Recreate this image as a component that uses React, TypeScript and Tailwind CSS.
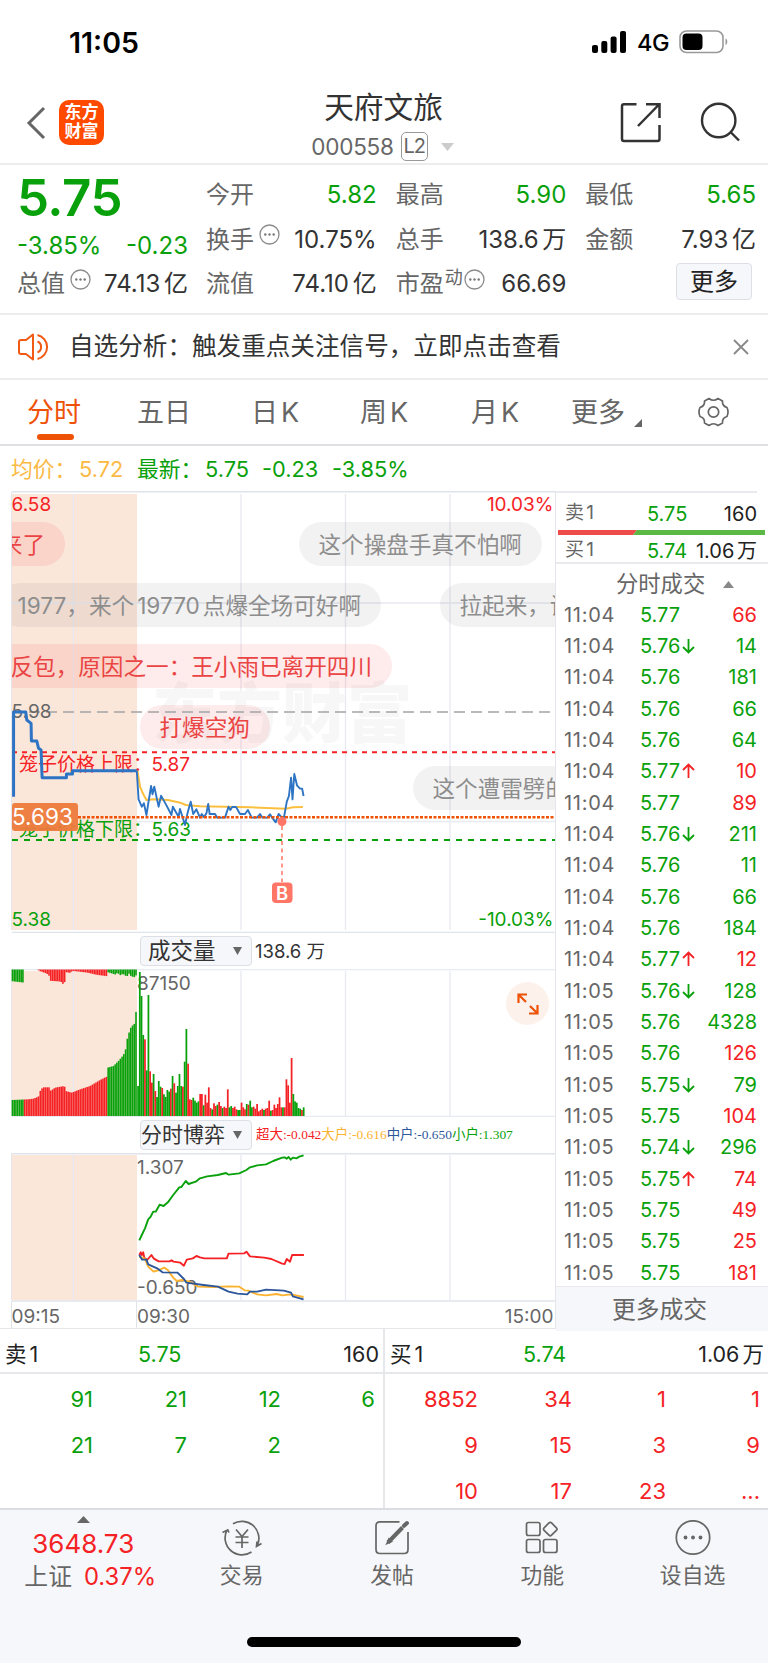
import React from 'react';

const GREEN = '#09a10b';
const RED = '#f52225';

type QuoteCell = { label: string; value: string; green?: boolean; info?: boolean; sup?: string };

const quoteCells: QuoteCell[] = [
  { label: '今开', value: '5.82', green: true },
  { label: '最高', value: '5.90', green: true },
  { label: '最低', value: '5.65', green: true },
  { label: '换手', value: '10.75%', info: true },
  { label: '总手', value: '138.6 万' },
  { label: '金额', value: '7.93 亿' },
  { label: '流值', value: '74.10 亿' },
  { label: '市盈', value: '66.69', info: true, sup: '动' },
];

// time, price, direction, volume, volume is red
const trades: [string, string, string, string, boolean][] = [
  ['11:04', '5.77', '', '66', true],
  ['11:04', '5.76', '↓', '14', false],
  ['11:04', '5.76', '', '181', false],
  ['11:04', '5.76', '', '66', false],
  ['11:04', '5.76', '', '64', false],
  ['11:04', '5.77', '↑', '10', true],
  ['11:04', '5.77', '', '89', true],
  ['11:04', '5.76', '↓', '211', false],
  ['11:04', '5.76', '', '11', false],
  ['11:04', '5.76', '', '66', false],
  ['11:04', '5.76', '', '184', false],
  ['11:04', '5.77', '↑', '12', true],
  ['11:05', '5.76', '↓', '128', false],
  ['11:05', '5.76', '', '4328', false],
  ['11:05', '5.76', '', '126', true],
  ['11:05', '5.75', '↓', '79', false],
  ['11:05', '5.75', '', '104', true],
  ['11:05', '5.74', '↓', '296', false],
  ['11:05', '5.75', '↑', '74', true],
  ['11:05', '5.75', '', '49', true],
  ['11:05', '5.75', '', '25', true],
  ['11:05', '5.75', '', '181', true],
];

const volumeBars =
  'g90 g432 g360 g243 r230 g137 g363 r134 r100 g126 r75 g57 g105 g88 r84 g65 g57 g78 g73 r82 g120 r98 g70 g90 g126 g90 r88 g163 g261 r157 r50 r48 g55 g46 g40 g44 r66 r66 g32 r64 r40 r86 r24 g20 r38 r30 g34 r42 r30 g24 r28 r24 r80 g26 g30 r24 r28 r20 g18 g18 r40 r26 r20 g36 r34 g46 g26 r28 r22 r36 r14 r18 r22 g18 r22 r24 r46 g16 r18 r34 r24 r36 r56 r26 g26 r26 r110 r92 r40 r174 g66 g44 g40 g24 g22 r18 g26'.split(' ');

const auctionBottom: [number, number][] = [
  [35, 48], [84, 50], [100, 52], [115, 58], [122, 80], [130, 86], [148, 86], [152, 76], [165, 85], [193, 90], [197, 75], [215, 70], [240, 80],
  [270, 90], [300, 108], [320, 118], [322, 145], [340, 150], [355, 165], [370, 183], [376, 198], [381, 230], [390, 262], [400, 275], [406, 278], [408, 320], [412, 322],
];
const auctionTop: [number, number][] = [
  [35, 35], [69, 39], [71, 0], [110, 0], [120, 5], [140, 12], [148, 20], [151, 34], [182, 36], [187, 43], [193, 43], [197, 8], [212, 10],
  [216, 4], [260, 9], [290, 16], [321, 20], [323, 8], [345, 15], [352, 10], [362, 18], [368, 12], [380, 22], [386, 12], [396, 24], [400, 16], [405, 30], [408, 16], [412, 16],
];

const lerp = (keys: [number, number][], x: number) => {
  const i = keys.findIndex(([kx]) => kx >= x);
  if (i <= 0) return keys[i === 0 ? 0 : keys.length - 1][1];
  const [x0, y0] = keys[i - 1];
  const [x1, y1] = keys[i];
  return y0 + ((y1 - y0) * (x - x0)) / (x1 - x0);
};

const auction = Array.from({ length: 72 }, (_, i) => {
  const x = 35 + i * 5.22;
  const bottomGreen = x < 69 || x > 320 || (x > 93 && x < 97);
  const topGreen = x < 105 || x > 320;
  return { x: x / 3, bottom: lerp(auctionBottom, x + 2) / 3, top: lerp(auctionTop, x + 2) / 3, bottomGreen, topGreen };
});

const Info: React.FC = () => (
  <svg width="21" height="21" viewBox="0 0 21 21" className="shrink-0">
    <circle cx="10.5" cy="10.5" r="9.5" fill="none" stroke="#8c8c8c" strokeWidth="1.3" />
    {[6.3, 10.5, 14.7].map((x) => <circle key={x} cx={x} cy="10.5" r="1.2" fill="#777" />)}
  </svg>
);

const StatusBar: React.FC = () => (
  <div className="h-[84px] flex items-start justify-between pl-[69px] pr-[39px] text-black">
    <span className="mt-[25px] text-[28.5px] leading-[36px] font-semibold">11:05</span>
    <div className="flex mt-[30px] items-center h-[24px]">
      <svg width="35" height="22" viewBox="0 0 35 22">
        <rect x="0" y="14" width="6" height="8" rx="2" />
        <rect x="9.3" y="10" width="6" height="12" rx="2" />
        <rect x="18.6" y="5.500" width="6" height="16.500" rx="2" />
        <rect x="28" y="0" width="6" height="22" rx="2" />
      </svg>
      <span className="ml-[10px] w-[34px] text-[23.5px] leading-[24px] font-medium tracking-[-0.5px] pt-[2px]">4G</span>
      <svg width="50" height="24" viewBox="0 0 50 24" className="ml-[8px]">
        <rect x="1" y="1" width="43" height="21.5" rx="6.500" fill="none" stroke="#999" strokeWidth="1.6" />
        <rect x="3.500" y="3.500" width="20" height="16.500" rx="4" />
        <path d="M46.500 8.500c2.400 1 2.400 5.500 0 6.500z" fill="#999" />
      </svg>
    </div>
  </div>
);

const Header: React.FC = () => (
  <div className="h-[81px] flex border-b-2 border-[#ececee]">
    <div className="w-[260px] flex pl-[26px] pt-[16px]">
      <svg width="20" height="34" viewBox="0 0 20 34" className="mt-[6px]">
        <path d="M18 2L3 17L18 32" fill="none" stroke="#666" strokeWidth="3" />
      </svg>
      <div className="ml-[13px] w-[45px] h-[45px] rounded-[10px] bg-[#ff4a00] text-white text-[17px] leading-[18.5px] font-bold text-center pt-[3px]">
        东方<br />财富
      </div>
    </div>
    <div className="flex-1 flex flex-col items-center">
      <div className="text-[29.7px] leading-[36px] mt-[5px] pr-px text-[#333]">天府文旅</div>
      <div className="flex items-center h-[29px] mt-[7px] pr-[3px] text-[#666]">
        <span className="text-[22.5px] tracking-[-0.200px]">000558</span>
        <span className="ml-[7px] w-[27px] h-[29px] border-[1.5px] border-[#999] rounded-[5px] text-[20px] leading-[26px] text-center tracking-[-1px]">L2</span>
        <svg width="13" height="8" viewBox="0 0 13 8" className="ml-[13px]"><path d="M0 0H13L6.5 8z" fill="#ccc" /></svg>
      </div>
    </div>
    <div className="w-[260px] flex justify-end pr-[27px] pt-[18px]">
      <svg width="41" height="41" viewBox="0 0 41 41" fill="none" stroke="#333" strokeWidth="2.500">
        <path d="M16.500 2.200H4Q2 2.200 2 4.200V37Q2 39 4 39H37.500Q39.500 39 39.500 37V23M26 2.200H39.500V16M39 2.500L18 24" />
      </svg>
      <svg width="41" height="41" viewBox="0 0 41 41" fill="none" stroke="#333" strokeWidth="2.400" className="ml-[39px]">
        <circle cx="18.700" cy="18.500" r="16.700" />
        <path d="M30.500 30L39 38.500" />
      </svg>
    </div>
  </div>
);

const Quote: React.FC = () => (
  <div className="h-[150px] flex border-b-2 border-[#ececee] pl-[17px] pr-[12px] text-[24px] leading-[30px] [word-spacing:-3px]">
    <div className="w-[171px] pt-[5px]">
      <div className="text-[51px] leading-[56px] font-semibold text-[#09a10b] tracking-[-0.5px]">5.75</div>
      <div className="flex justify-between text-[#09a10b] mt-[5px]">
        <span>-3.85%</span>
        <span>-0.23</span>
      </div>
      <div className="flex mt-[8px] text-[#333]">
        <span className="text-[#666]">总值</span>
        <span className="ml-[5px]"><Info /></span>
        <span className="ml-auto">74.13 亿</span>
      </div>
    </div>
    <div className="flex-1 ml-[18px] pt-[15px] grid grid-cols-3 gap-x-[19px] auto-rows-[44.6px]">
      {quoteCells.map((c) => (
        <div key={c.label} className="flex">
          <span className="text-[#666]">{c.label}</span>
          {c.sup && <span className="text-[18px] leading-[18px] ml-px text-[#666]">{c.sup}</span>}
          {c.info && <span className={c.sup ? 'ml-px' : '-mt-px ml-[5px]'}><Info /></span>}
          <span className={`ml-auto ${c.green ? 'text-[#09a10b]' : 'text-[#333]'}`}>{c.value}</span>
        </div>
      ))}
      <div className="flex justify-end pr-[4px]">
        <button className="-mt-[6px] w-[76px] h-[37px] rounded-[4px] border-[1.5px] border-[#dcdfe6] bg-[#f6f7fa] text-[24px] leading-[32px] text-[#222]">更多</button>
      </div>
    </div>
  </div>
);

const Notice: React.FC = () => (
  <div className="h-[65px] flex items-center border-b-2 border-[#ececee] pl-[18px] pr-[19px]">
    <svg width="32" height="28" viewBox="0 0 32 28" fill="none" stroke="#f05a14" strokeWidth="2">
      <path d="M15 1.500V26.500L8 21H3Q1 21 1 19V9Q1 7 3 7H8z" strokeLinejoin="round" />
      <path d="M19.500 8.500A6 6 0 0 1 19.500 19.500M19.500 2A12.300 12.300 0 0 1 19.500 26" />
    </svg>
    <span className="ml-[19px] text-[24.6px] text-[#333] whitespace-nowrap">自选分析：触发重点关注信号，立即点击查看</span>
    <svg width="16" height="16" viewBox="0 0 16 16" className="ml-auto"><path d="M1 1L15 15M15 1L1 15" stroke="#888" strokeWidth="1.8" /></svg>
  </div>
);

const Tabs: React.FC = () => (
  <div className="h-[66px] flex border-b-2 border-[#dfe0e3] text-[27px] leading-[36px] text-[#666] pt-[15px] pl-[27px] whitespace-nowrap">
    <div className="w-[110px] text-[#ee5206]">
      分时
      <div className="ml-[10px] mt-[3px] w-[37px] h-[6px] rounded-full bg-[#ee5206]" />
    </div>
    <div className="w-[114px]">五日</div>
    <div className="w-[109px] tracking-[3px]">日K</div>
    <div className="w-[111px] tracking-[3px]">周K</div>
    <div className="w-[100px] tracking-[3px]">月K</div>
    <div className="w-[127px] flex">
      更多
      <svg width="8" height="8" viewBox="0 0 8 8" className="ml-[9px] mt-[24px]"><path d="M8 0V8H0z" fill="#666" /></svg>
    </div>
    <svg width="31" height="30" viewBox="0 0 31 30" fill="none" stroke="#666" strokeWidth="1.700" strokeLinejoin="round" className="mt-[2px]">
      <path d="M11 1.500Q15.500 5 20 1.500L24.500 4Q24 9 29 10.500Q31 15 29 19.500Q24 21 24.500 26L20 28.500Q15.500 25 11 28.500L6.500 26Q7 21 2 19.500Q0 15 2 10.500Q7 9 6.500 4z" />
      <circle cx="15.500" cy="15" r="5.200" />
    </svg>
  </div>
);

const Pill: React.FC<{ className: string; red?: boolean; children: React.ReactNode }> = ({ className, red, children }) => (
  <div className={`absolute h-[44px] rounded-full leading-[45px] text-[22.6px] px-[20px] whitespace-nowrap ${red ? 'bg-[#f23c3c]/10 text-[#ea4444]' : 'bg-black/5 text-[#8d8d8d]'} ${className}`}>
    {children}
  </div>
);

const Grid: React.FC<{ top: number; bottom: number }> = ({ top, bottom }) => (
  <>
    <rect x="12" y={top} width="125" height={bottom - top} fill="#fbe6da" />
    {[73.5, 241, 345.500, 450].map((x) => <path key={x} d={`M${x} ${top}V${bottom}`} stroke="#e7eaf2" strokeWidth="1.300" />)}
    <path d={`M11.500 ${top - 2}V${bottom}`} stroke="#e4e6ec" />
  </>
);

const PriceChart: React.FC = () => (
  <div className="relative w-[555px] h-[442px] overflow-hidden">
    <svg width="555" height="442" viewBox="0 491 555 442" className="absolute inset-0">
      <Grid top={494} bottom={930} />
      <path d="M12 603H555M137 821.500H555" stroke="#e7eaf2" strokeWidth="1.300" />
      <path d="M12 491.700H555M12 932.500H555" stroke="#dfe3ea" strokeWidth="1.600" />
      <text x="152" y="737" fontSize="65" fontWeight="900" fill="#f7f7f8">东方财富</text>
    </svg>
    <div className="absolute left-[11.500px] right-0 inset-y-0 overflow-hidden">
      <Pill red className="top-[31px] right-[490px]">来了</Pill>
      <Pill className="top-[31px] left-[287px]">这个操盘手真不怕啊</Pill>
      <Pill className="top-[92px] right-[174px]">1977，来个<span className="mx-[3px]">19770</span>点爆全场可好啊</Pill>
      <Pill className="top-[92px] left-[428px]">拉起来，试</Pill>
      <Pill red className="top-[153px] right-[163px]">反包，原因之一：王小雨已离开四川</Pill>
      <Pill red className="top-[214px] left-[128px]">打爆空狗</Pill>
      <Pill className="top-[275px] left-[401px]">这个遭雷劈的</Pill>
    </div>
    <svg width="555" height="442" viewBox="0 491 555 442" className="absolute inset-0">
      <path d="M12 712H555" stroke="#a4a4a4" strokeWidth="1.500" strokeDasharray="11 6" />
      <path d="M12 752.300H555" stroke={RED} strokeWidth="2" strokeDasharray="5 5" />
      <path d="M12 840H555" stroke={GREEN} strokeWidth="2" strokeDasharray="6 6" />
      <g fontSize="19" fill="#666">
        <text x="11.500" y="718">5.98</text>
        <text x="11.500" y="510.500" fill={RED}>6.58</text>
        <text x="553.500" y="510.500" fill={RED} textAnchor="end">10.03%</text>
        <text x="11.500" y="926" fill={GREEN}>5.38</text>
        <text x="553.500" y="926" fill={GREEN} textAnchor="end">-10.03%</text>
        <text x="19" y="770.500" fill={RED}>笼子价格上限：</text>
        <text x="151.500" y="770.500" fill={RED}>5.87</text>
        <text x="19" y="836" fill={GREEN}>笼子价格下限：</text>
        <text x="151.500" y="836" fill={GREEN}>5.63</text>
      </g>
      <g transform="translate(0 690) scale(.35714 .33333)" fill="none" strokeLinejoin="round">
        <path vectorEffect="non-scaling-stroke" stroke="#fbbf3f" strokeWidth="2" d="M385 242L392 290L400 310L410 330L430 328L470 330L505 338L520 345L560 349L700 352L800 356L820 352L848 351" />
        <path vectorEffect="non-scaling-stroke" stroke="#2e74c4" strokeWidth="3" d="M38 320V66H72L75 90L87 100L88 153H103L108 175L115 180L117 240L118 263H186V252H203V242H383" />
        <path vectorEffect="non-scaling-stroke" stroke="#2e74c4" strokeWidth="1.900" d="M383 242L388 328L397 350L403 340L410 375L423 288L427 313L432 290L444 350L451 317L468 350L480 375L484 350L500 380L504 357L518 405L526 365L534 335L541 372L550 358L560 383L565 372L571 382L578 370L583 342L587 372H602L608 383H630L640 350L645 360L650 351H661L672 372H686L694 360L705 383H720L728 372L735 383H748L756 373L762 383L772 397L780 372L787 380L795 383L803 335L809 318L815 263L819 328L824 252L832 287L840 296H846L850 318" />
      </g>
      <rect x="12" y="803" width="66" height="28" rx="3" fill="#ee7a3c" fillOpacity=".95" />
      <text x="12" y="825" fontSize="22.500" fill="#fff">5.693</text>
      <path d="M78 817.300H555" stroke="#ee5206" strokeWidth="2.600" strokeDasharray="3 1.500" />
      <circle cx="282" cy="821.500" r="4.500" fill="#ff7566" />
      <path d="M282 826V882" stroke="#ff7566" strokeWidth="1.500" strokeDasharray="4 3.500" />
      <rect x="272" y="882.500" width="20.500" height="20.500" rx="4" fill="#ff7566" />
      <text x="282.200" y="899.500" fontSize="18.500" fontWeight="600" fill="#fff" textAnchor="middle">B</text>
    </svg>
  </div>
);

const Select: React.FC<{ children: string; pad: string }> = ({ children, pad }) => (
  <div className={`ml-[140px] w-[112px] h-[30px] flex items-center rounded-[4px] border-[1.500px] border-[#dcdfe6] bg-[#f6f7fa] leading-[28px] text-[#333] whitespace-nowrap ${pad}`}>
    {children}
    <svg width="9" height="8" viewBox="0 0 9 8" className="ml-auto"><path d="M0 0H9L4.500 8z" fill="#666" /></svg>
  </div>
);

const VolumeChart: React.FC = () => (
  <>
    <div className="h-[36px] flex pt-[3px] items-start">
      <Select pad="pl-[7px] pr-[9px] text-[22.500px]">成交量</Select>
      <span className="ml-[3px] text-[18.500px] leading-[31px] text-[#333]">138.6 万</span>
    </div>
    <div className="relative h-[148px]">
      <svg width="555" height="148" viewBox="0 969 555 148">
        <Grid top={971} bottom={1116} />
        <path d="M12 969.500H555M12 1116.500H555" stroke="#e7eaf0" strokeWidth="1.500" />
        {auction.map((b) => (
          <g key={b.x}>
            <rect x={b.x} y={969.5} width="1.6" height={b.top} fill={b.topGreen ? GREEN : RED} />
            <rect x={b.x} y={1116 - b.bottom} width="1.6" height={b.bottom} fill={b.bottomGreen ? GREEN : RED} />
          </g>
        ))}
        <text x="137" y="990" fontSize="19" fill="#666">87150</text>
        {volumeBars.map((bar, i) => {
          const h = Number(bar.slice(1)) / 3;
          return <rect key={i} x={137.2 + i * 1.725} y={1116 - h} width="1.75" height={h} fill={bar[0] === 'g' ? GREEN : RED} />;
        })}
      </svg>
      <div className="absolute left-[506px] top-[13px] w-[43px] h-[43px] rounded-full bg-[#fdf1eb] flex items-center justify-center">
        <svg width="22" height="22" viewBox="0 0 22 22" fill="none" stroke="#ee5206" strokeWidth="2.200">
          <path d="M1.500 10V1.500H10M1.500 1.500L9 9M20.500 12V20.500H12M20.500 20.500L13 13" />
        </svg>
      </div>
    </div>
  </>
);

const FlowChart: React.FC = () => (
  <>
    <div className="h-[36px] flex pt-[3px] items-start">
      <Select pad="pl-0 pr-[9px] text-[21px]">分时博弈</Select>
      <span className="ml-[4px] font-['Liberation_Serif','Noto_Sans_CJK_SC',serif] text-[13.450px] leading-[30px] whitespace-nowrap">
        <span className="text-[#f52225]">超大:-0.042</span>
        <span className="text-[#fbb32f]">大户:-0.616</span>
        <span className="text-[#2d579b]">中户:-0.650</span>
        <span className="text-[#09a10b]">小户:1.307</span>
      </span>
    </div>
    <svg width="555" height="176" viewBox="0 1153 555 176" className="block">
      <Grid top={1155} bottom={1300} />
      <path d="M12 1153.700H555M12 1301H555" stroke="#dfe3ea" strokeWidth="1.700" />
      <path d="M136.500 1301V1329M11.500 1301V1329" stroke="#dfe3ea" />
      <g fontSize="19" fill="#666">
        <text x="137" y="1173.500">1.307</text>
        <text x="137" y="1294">-0.650</text>
        <text x="11.500" y="1322.500">09:15</text>
        <text x="137" y="1322.500">09:30</text>
        <text x="553.500" y="1322.500" textAnchor="end">15:00</text>
      </g>
      <g transform="translate(0 1115) scale(.35714 .33333)" fill="none" strokeWidth="1.900" strokeLinejoin="round">
        <path vectorEffect="non-scaling-stroke" stroke={GREEN} d="M390 376L397 360L406 340L415 313L422 305L429 290H436L447 269L458 273L470 262L485 240L502 217L508 216L520 198L528 207L548 200L560 190L580 184L610 180L633 174L640 179L670 175L690 165L700 157L720 151L745 148L765 138L790 128L797 127L803 131L808 126L814 134L820 128L830 130L838 125L850 121" />
        <path vectorEffect="non-scaling-stroke" stroke={RED} d="M390 420L394 412L397 420L401 412L404 428L412 435L424 420L430 430L444 439H475L480 436L486 440L505 443L515 452L523 434L540 430L550 423L560 427L572 430H635L640 416L684 415L690 410L700 424L740 428L760 432L790 446L797 447L803 432L812 440L818 420H851" />
        <path vectorEffect="non-scaling-stroke" stroke="#fbb32f" d="M390 425L405 430L415 455L430 470L445 465L460 458L470 465L485 488L495 498L510 495L530 500L555 515L600 516L640 514L670 515L685 526L695 527L720 538L745 541L775 537L790 541L815 538L850 546" />
        <path vectorEffect="non-scaling-stroke" stroke="#2d579b" d="M390 420L398 434H410L415 448L440 460L455 472L497 473L515 492L522 503L570 510L610 515L640 530L665 536L692 538L700 530H720L745 524L795 527L815 533L820 544L850 553" />
      </g>
    </svg>
  </>
);

const TradePanel: React.FC = () => (
  <div className="w-[213px] border-l border-[#e4e6ec] text-[20px] [word-spacing:-3px]">
    <div className="mr-[11px] border-t-2 border-[#e8eaee] h-[39px] flex items-center pt-[4px]">
      <span className="ml-[9px] w-[82px] text-[#666] text-[19px]">卖 1</span>
      <span className="text-[#09a10b]">5.75</span>
      <span className="ml-auto text-[#222]">160</span>
    </div>
    <svg width="207" height="5" viewBox="0 0 207 5" className="ml-[2px]">
      <path d="M0 0H79L75 5H0z" fill="#ee4b4b" />
      <path d="M79 0H207V5H75z" fill="#5cb946" />
    </svg>
    <div className="h-[29px] pr-[11px] flex items-center border-b-2 border-[#e8eaee] pt-[4px]">
      <span className="ml-[9px] w-[82px] text-[#666] text-[19px]">买 1</span>
      <span className="text-[#09a10b]">5.74</span>
      <span className="ml-auto text-[#222]">1.06 万</span>
    </div>
    <div className="h-[35px] flex items-center pl-[60px] pt-[5px] text-[22.300px] text-[#666]">
      分时成交
      <svg width="11" height="7" viewBox="0 0 11 7" className="ml-[18px]"><path d="M0 7H11L5.500 0z" fill="#888" /></svg>
    </div>
    {trades.map(([time, price, dir, vol, red], i) => (
      <div key={i} className="h-[31.330px] flex items-center pr-[11px]">
        <span className="ml-[8px] w-[76px] text-[#666] tracking-[0.700px]">{time}</span>
        <span className="w-[41px] text-[#09a10b]">{price}</span>
        {dir && (
          <svg width="13" height="16" viewBox="0 0 13 16" fill="none" stroke={dir === '↑' ? RED : GREEN} strokeWidth="1.800" className="ml-px">
            <path d={dir === '↑' ? 'M6.500 15V1.500M1 7L6.500 1.500L12 7' : 'M6.500 1V14.500M1 9L6.500 14.500L12 9'} />
          </svg>
        )}
        <span className={`ml-auto ${red ? 'text-[#f52225]' : 'text-[#09a10b]'}`}>{vol}</span>
      </div>
    ))}
    <div className="h-[45px] -mt-[2px] bg-[#f6f7fa] border-t border-[#e8eaee] text-center text-[23.800px] leading-[46px] text-[#666] pr-[5px]">更多成交</div>
  </div>
);

const OrderSide: React.FC<{ label: string; price: string; total: string; rows: string[][]; className: string; color: string }> = ({ label, price, total, rows, className, color }) => (
  <div className={className}>
    <div className="h-[45px] flex items-center justify-between border-b-2 border-[#e6e7eb] pl-[5px] pr-[4px] pt-[7px] text-[21.500px] text-[#222] [word-spacing:-3px]">
      <span className="w-[133px]">{label}</span>
      <span className="text-[#09a10b]">{price}</span>
      <span className="flex-1 text-right">{total}</span>
    </div>
    <div className={`grid grid-cols-4 pt-[2px] pr-[8px] -ml-px auto-rows-[46px] leading-[46px] text-right text-[22px] ${color}`}>
      {rows.flat().map((n, i) => <span key={i}>{n}</span>)}
    </div>
  </div>
);

const NavItem: React.FC<{ label: string; children: React.ReactNode }> = ({ label, children }) => (
  <div className="w-[150.300px] flex flex-col items-center">
    <svg width="42" height="36" viewBox="0 0 42 36" fill="none" stroke="#666" strokeWidth="1.700" className="mt-[10px]">
      {children}
    </svg>
    <span className="mt-[4px] text-[21.800px] leading-[30px] text-[#666]">{label}</span>
  </div>
);

const BottomNav: React.FC = () => (
  <div className="relative h-[155px] bg-[#f6f7fa] border-t-2 border-[#d9dce2] flex">
    <div className="w-[166.500px] flex flex-col items-center">
      <svg width="13" height="7" viewBox="0 0 13 7" className="mt-[6px]"><path d="M0 7H13L6.500 0z" fill="#666" /></svg>
      <span className="mt-[4px] text-[26px] leading-[34px] text-[#f52225]">3648.73</span>
      <span className="text-[23.800px] leading-[32px] text-[#666] pl-[14px] whitespace-nowrap">
        上证<span className="ml-[12px] text-[#f52225]">0.37%</span>
      </span>
    </div>
    <NavItem label="交易">
      <path d="M12 3.800A17 17 0 0 1 36.500 25M30.500 32A17 17 0 0 1 6 10M1.500 12.500L6.800 9.800L8 12.500M40.500 23.500L35.500 26.500L36 21.500" />
      <path d="M15 9.500L21 16.500L27 9.500M14.500 17H27.500M14.500 22.500H27.500M21 16.500V28" />
    </NavItem>
    <NavItem label="发帖">
      <path d="M28.500 1.800H9Q5 1.800 5 5.800V29.500Q5 33.500 9 33.500H33Q37 33.500 37 29.500V12" />
      <path d="M17 22.500L31.500 7.500" strokeWidth="4" />
      <path d="M16 23.500L20.500 21.500L18 19z" fill="#666" />
      <path d="M33 5.800L36 3" strokeWidth="4" strokeLinecap="round" />
    </NavItem>
    <NavItem label="功能">
      <rect x="5.500" y="2.500" width="13.500" height="13" rx="2" />
      <rect x="5.500" y="19.500" width="13.500" height="13" rx="2" />
      <rect x="22.500" y="19.500" width="13.500" height="13" rx="2" />
      <rect x="24" y="3.800" width="10.500" height="10.500" rx="1.800" transform="rotate(45 29.250 9.050)" />
    </NavItem>
    <NavItem label="设自选">
      <circle cx="21" cy="17.500" r="16.700" />
      {[13.5, 21, 28.5].map((x) => <circle key={x} cx={x} cy="17.500" r="1.900" fill="#666" stroke="none" />)}
    </NavItem>
    <div className="absolute left-[247px] top-[127px] w-[274px] h-[10px] rounded-full bg-black" />
  </div>
);

export default function App() {
  return (
    <div className="w-[768px] h-[1663px] bg-white overflow-hidden font-['Inter','Noto_Sans_CJK_SC',sans-serif]">
      <StatusBar />
      <Header />
      <Quote />
      <Notice />
      <Tabs />
      <div className="h-[45px] flex items-center pl-[11px] pt-px text-[21.800px] text-[#09a10b] whitespace-nowrap">
        <span className="w-[68px] text-[#fbb944]">均价：</span>
        <span className="w-[58px] text-[#fbb944]">5.72</span>
        <span className="w-[68px]">最新：</span>
        <span className="w-[57px]">5.75</span>
        <span className="w-[70px]">-0.23</span>
        <span>-3.85%</span>
      </div>
      <div className="h-[838px] flex">
        <div className="w-[555px] border-b-[1.500px] border-[#e4e6ea]">
          <PriceChart />
          <VolumeChart />
          <FlowChart />
        </div>
        <TradePanel />
      </div>
      <div className="h-[179px] flex overflow-hidden">
        <OrderSide
          className="w-[383px]"
          color="text-[#09a10b]"
          label="卖 1"
          price="5.75"
          total="160"
          rows={[['91', '21', '12', '6'], ['21', '7', '2', '']]}
        />
        <OrderSide
          className="w-[385px] border-l-2 border-[#e6e7eb]"
          color="text-[#f52225]"
          label="买 1"
          price="5.74"
          total="1.06 万"
          rows={[['8852', '34', '1', '1'], ['9', '15', '3', '9'], ['10', '17', '23', '...']]}
        />
      </div>
      <BottomNav />
    </div>
  );
}
